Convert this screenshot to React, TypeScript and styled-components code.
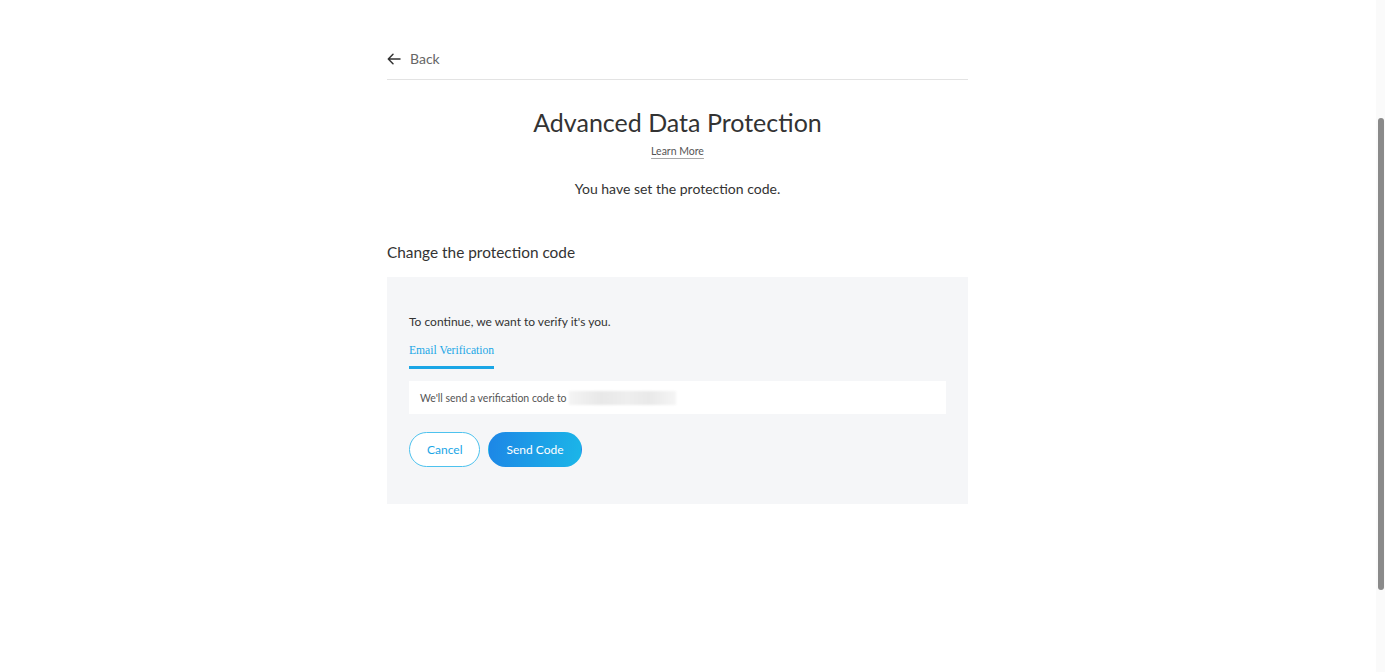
import styled, { createGlobalStyle } from 'styled-components';

const GlobalStyle = createGlobalStyle`
  html, body {
    margin: 0;
    padding: 0;
    background: #ffffff;
    font-family: 'Lato', 'Noto Sans', sans-serif;
    color: #333333;
  }
`;

const Page = styled.div`
  min-height: 672px;
  padding: 0 30px 0 0;
  box-sizing: border-box;
`;

const Column = styled.div`
  width: 581px;
  margin: 0 auto;
  padding-top: 38px;
`;

const BackRow = styled.div`
  display: flex;
  align-items: center;
  gap: 9px;
  height: 41px;
  border-bottom: 1px solid #e3e3e3;
  color: #666666;
  font-size: 14px;
  cursor: pointer;
`;

const Title = styled.h1`
  margin: 26px 0 0;
  text-align: center;
  font-size: 25px;
  font-weight: 400;
  line-height: 32px;
  color: #333333;
`;

const LearnMore = styled.a`
  display: block;
  width: fit-content;
  margin: 7px auto 0;
  font-size: 10.5px;
  color: #555555;
  text-decoration: underline;
  text-decoration-color: #a8a8a8;
  text-underline-offset: 3px;
  text-decoration-thickness: 1px;
`;

const Status = styled.p`
  margin: 23px 0 0;
  text-align: center;
  font-size: 14px;
  color: #333333;
`;

const SectionTitle = styled.h2`
  margin: 45px 0 0;
  font-size: 15.4px;
  font-weight: 400;
  color: #333333;
  line-height: 20px;
`;

const Panel = styled.div`
  margin-top: 15px;
  background: #f5f6f8;
  padding: 37px 22px 37px;
`;

const Intro = styled.p`
  margin: 0;
  font-size: 12px;
  color: #333333;
  line-height: 16px;
`;

const Tabs = styled.div`
  display: flex;
  margin-top: 13px;
`;

const Tab = styled.div<{ active?: boolean }>`
  font-family: 'Liberation Serif', serif;
  font-size: 11.6px;
  line-height: 16px;
  padding-bottom: 7px;
  color: ${(p) => (p.active ? '#1aa6e6' : '#666666')};
  border-bottom: 3px solid ${(p) => (p.active ? '#1aa6e6' : 'transparent')};
`;

const InfoBox = styled.div`
  margin-top: 12px;
  height: 33px;
  background: #ffffff;
  display: flex;
  align-items: center;
  padding: 0 11px;
  font-size: 10.5px;
  color: #555555;
`;

const Blurred = styled.span`
  display: inline-block;
  width: 107px;
  height: 14px;
  margin-left: 2px;
  background: linear-gradient(90deg, #f4f4f4, #e8e8e8 30%, #eeeeee 55%, #e9e9e9 75%, #f5f5f5);
  filter: blur(1px);
`;

const Actions = styled.div`
  display: flex;
  gap: 8px;
  margin-top: 18px;
`;

const Button = styled.button<{ primary?: boolean }>`
  height: 35px;
  border-radius: 18px;
  font-family: 'Lato', 'Noto Sans', sans-serif;
  font-size: 12px;
  cursor: pointer;
  padding: 0 ${(p) => (p.primary ? '17px' : '17px')};
  border: 1px solid ${(p) => (p.primary ? 'transparent' : '#4dc2ee')};
  color: ${(p) => (p.primary ? '#ffffff' : '#1aa6e6')};
  background: ${(p) =>
    p.primary ? 'linear-gradient(100deg, #1d86e6 0%, #1bb6e8 100%)' : '#ffffff'};
`;

const ScrollTrack = styled.div`
  position: fixed;
  top: 0;
  right: 0;
  width: 9px;
  height: 672px;
  background: #fafafa;
`;

const ScrollThumb = styled.div`
  position: absolute;
  left: 2px;
  top: 118px;
  width: 6px;
  height: 472px;
  border-radius: 3px;
  background: #8a8a8a;
`;

function ArrowLeft() {
  return (
    <svg width="14" height="12" viewBox="0 0 14 12" fill="none">
      <path
        d="M13 6H1.5M6 1.3L1.3 6L6 10.7"
        stroke="#333"
        strokeWidth="1.5"
        strokeLinecap="round"
        strokeLinejoin="round"
      />
    </svg>
  );
}

export default function App() {
  return (
    <>
      <GlobalStyle />
      <Page>
        <Column>
          <BackRow>
            <ArrowLeft />
            <span>Back</span>
          </BackRow>
          <Title>Advanced Data Protection</Title>
          <LearnMore>Learn More</LearnMore>
          <Status>You have set the protection code.</Status>
          <SectionTitle>Change the protection code</SectionTitle>
          <Panel>
            <Intro>To continue, we want to verify it's you.</Intro>
            <Tabs>
              <Tab active>Email Verification</Tab>
            </Tabs>
            <InfoBox>
              We'll send a verification code to
              <Blurred />
            </InfoBox>
            <Actions>
              <Button>Cancel</Button>
              <Button primary>Send Code</Button>
            </Actions>
          </Panel>
        </Column>
      </Page>
      <ScrollTrack>
        <ScrollThumb />
      </ScrollTrack>
    </>
  );
}
